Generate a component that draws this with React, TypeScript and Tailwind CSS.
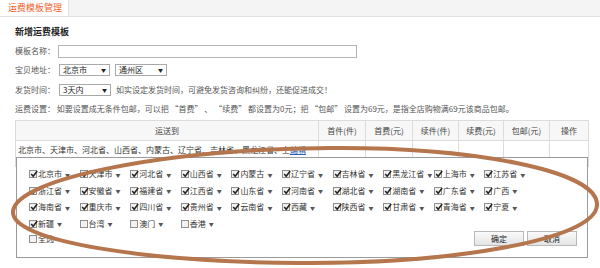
import React from "react";

const FONT = { fontFamily: '"Noto Sans CJK SC", "Noto Sans", sans-serif' };

const ROWS: { name: string; checked: boolean }[][] = [
  ["北京市", "天津市", "河北省", "山西省", "内蒙古", "辽宁省", "吉林省", "黑龙江省", "上海市", "江苏省"].map((n) => ({ name: n, checked: true })),
  ["浙江省", "安徽省", "福建省", "江西省", "山东省", "河南省", "湖北省", "湖南省", "广东省", "广西"].map((n) => ({ name: n, checked: true })),
  ["海南省", "重庆市", "四川省", "贵州省", "云南省", "西藏", "陕西省", "甘肃省", "青海省", "宁夏"].map((n) => ({ name: n, checked: true })),
  [
    { name: "新疆", checked: true },
    { name: "台湾", checked: false },
    { name: "澳门", checked: false },
    { name: "香港", checked: false },
  ],
];

const COLS = ["首件(件)", "首费(元)", "续件(件)", "续费(元)", "包邮(元)", "操作"];
const COL_W = ["w-[47px]", "w-[47px]", "w-[46px]", "w-[45px]", "w-[46px]", "w-[39px]"];

function Box({ checked }: { checked: boolean }) {
  return (
    <span className="relative inline-block w-[8px] h-[8px] border border-[#8f8f8f] bg-[#f2f2f2] mr-[1px] shrink-0">
      {checked && (
        <svg viewBox="0 0 8 8" className="absolute left-[0px] top-[-1px] w-[8px] h-[8px]">
          <path d="M1.2 4 L3.2 6.3 L7.2 1" stroke="#222" strokeWidth="1.5" fill="none" />
        </svg>
      )}
    </span>
  );
}

function Select({ label, w }: { label: string; w: string }) {
  return (
    <div className={`${w} h-[12px] border border-[#a9a9a9] bg-white flex items-center justify-between px-[3px] text-[8px] text-[#222]`}>
      <span>{label}</span>
      <span className="text-[5px]">▼</span>
    </div>
  );
}

export default function App() {
  return (
    <div className="relative w-[600px] h-[268px] bg-white overflow-hidden text-[#555] whitespace-nowrap" style={FONT}>
      {/* tab bar */}
      <div className="flex h-[17px] border-b border-[#e2e2e2]">
        <div className="w-[68px] flex items-center pl-[8px] text-[9px] text-[#f0602a] bg-white">运费模板管理</div>
        <div className="flex-1 bg-[#f4f4f4] border-l border-[#e2e2e2]" />
      </div>

      <div className="pl-[15px] pr-[12px]">
        <div className="mt-[9px] text-[9px] font-bold text-[#222] leading-[12px]">新增运费模板</div>

        <div className="mt-[6px] flex items-center h-[14px] text-[8px]">
          <span className="w-[43px]">模板名称：</span>
          <div className="w-[299px] h-[13px] border border-[#b5b5b5] bg-white" />
        </div>

        <div className="mt-[6px] flex items-center h-[12px] text-[8px] gap-[5px]">
          <span className="w-[39px]">宝贝地址：</span>
          <Select label="北京市" w="w-[51px]" />
          <Select label="通州区" w="w-[52px]" />
        </div>

        <div className="mt-[8px] flex items-center h-[12px] text-[8px] gap-[5px]">
          <span className="w-[39px]">发货时间：</span>
          <Select label="3天内" w="w-[52px]" />
          <span>如实设定发货时间，可避免发货咨询和纠纷，还能促进成交！</span>
        </div>

        <div className="mt-[7px] flex items-center h-[12px] text-[8px]">
          <span>运费设置：&nbsp;如要设置成无条件包邮，可以把 “首费” 、 “续费” 都设置为0元；把 “包邮” 设置为69元，是指全店购物满69元该商品包邮。</span>
        </div>

        {/* table + popup */}
        <div className="relative mt-[5px] w-[573px]">
          <table className="w-full table-fixed border-collapse text-[8px] text-[#444]">
            <thead>
              <tr className="h-[20px] bg-[#f7f7f7]">
                <th className="border border-[#dcdcdc] font-normal w-[303px]">运送到</th>
                {COLS.map((c, i) => (
                  <th key={c} className={`border border-[#dcdcdc] font-normal ${COL_W[i]}`}>{c}</th>
                ))}
              </tr>
            </thead>
            <tbody>
              <tr className="h-[26px] align-top">
                <td className="border border-[#dcdcdc] pl-[2px] pt-[3px] leading-[11px] text-[#333] overflow-hidden">
                  北京市、天津市、河北省、山西省、内蒙古、辽宁省、吉林省、黑龙江省、上
                  <span className="text-[#2b5fb4] underline">编辑</span>
                  <br />
                  海市、江苏省、浙江省、安徽省、福建省、江西省、山东省
                </td>
                {COLS.map((c) => (
                  <td key={c} className="border border-[#dcdcdc]" />
                ))}
              </tr>
            </tbody>
          </table>

          {/* area picker */}
          <div className="absolute left-[1px] top-[37px] w-[572px] h-[101px] border border-[#9a9a9a] bg-white pl-[12px] pt-[8px] text-[8px] text-[#333]">
            {ROWS.map((row, ri) => (
              <div key={ri} className="flex h-[16.5px] items-center">
                {row.map((p) => (
                  <div key={p.name} className="w-[50.6px] flex items-center shrink-0">
                    <Box checked={p.checked} />
                    <span>{p.name}</span>
                    <span className="ml-[3px] text-[5px] text-[#555]">▼</span>
                  </div>
                ))}
              </div>
            ))}
            <div className="flex h-[14px] items-center">
              <Box checked={false} />
              <span>全选</span>
            </div>
            <div className="absolute right-[10px] top-[73px] flex gap-[3px]">
              <button className="w-[50px] h-[15px] border border-[#b9b9b9] bg-gradient-to-b from-[#fafafa] to-[#e4e4e4] text-[8px] text-[#222]">确定</button>
              <button className="w-[50px] h-[15px] border border-[#b9b9b9] bg-gradient-to-b from-[#fafafa] to-[#e4e4e4] text-[8px] text-[#222]">取消</button>
            </div>
          </div>
        </div>
      </div>

      {/* hand-drawn annotation */}
      <svg className="absolute inset-0 pointer-events-none" width="600" height="268" viewBox="0 0 600 268">
        <path
          d="M330 148 C 470 147, 598 170, 597 205 C 596 240, 450 264, 300 263 C 150 262, 12 242, 13 212 C 14 178, 170 149, 330 148 Z"
          fill="none"
          stroke="#b5764d"
          strokeWidth="4"
        />
      </svg>
    </div>
  );
}
